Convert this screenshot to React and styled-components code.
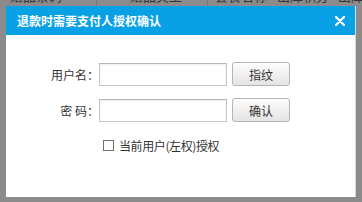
import React from 'react'
import styled, { createGlobalStyle } from 'styled-components'

const Global = createGlobalStyle`
  html, body {
    margin: 0;
    padding: 0;
    width: 362px;
    height: 202px;
    overflow: hidden;
    background: #8b8b8b;
    font-family: "Noto Sans CJK SC", "Microsoft YaHei", sans-serif;
  }
`

const Page = styled.div`
  position: relative;
  width: 362px;
  height: 202px;
  overflow: hidden;
`

const HeaderRow = styled.div`
  display: flex;
  height: 20px;
  margin-top: -14px;
  color: #333;
  font-size: 13px;
  line-height: 20px;
`

const HeadCell = styled.div`
  width: ${p => p.w}px;
  flex-shrink: 0;
  padding-left: ${p => p.pad || 0}px;
  box-sizing: border-box;
  white-space: nowrap;
  overflow: hidden;
  border-right: ${p => (p.line ? '1px solid #777' : 'none')};
`

const Dialog = styled.div`
  position: absolute;
  left: 6px;
  top: 6px;
  width: 350px;
  height: 191px;
  background: #fff;
  border-right: 1px solid #d8d8d8;
  box-sizing: border-box;
  display: flex;
  flex-direction: column;
`

const TitleBar = styled.div`
  height: 29px;
  background: #09a1e6;
  display: flex;
  align-items: center;
  justify-content: space-between;
  padding: 0 10px 0 11px;
  color: #fff;
  font-size: 12px;
  font-weight: bold;
`

const Close = styled.span`
  display: flex;
  width: 10px;
  height: 10px;
`

const Body = styled.div`
  padding: 27px 0 0 45px;
`

const Form = styled.div`
  display: grid;
  grid-template-columns: 48px 128px 63px;
  row-gap: 12px;
  align-items: center;
`

const Label = styled.label`
  text-align: right;
  font-size: 12px;
  color: #333;
  white-space: pre;
`

const Input = styled.input`
  height: 23px;
  box-sizing: border-box;
  border: 1px solid #c6c6c6;
  border-top-color: #b5b5b5;
  box-shadow: inset 0 1px 2px rgba(0, 0, 0, 0.08);
  outline: none;
  padding: 0 4px;
  margin: 0;
`

const Button = styled.button`
  justify-self: end;
  width: 58px;
  height: 24px;
  box-sizing: border-box;
  border: 1px solid #b4b4b4;
  border-radius: 3px;
  background: linear-gradient(#fdfdfd, #e4e4e4);
  font-family: inherit;
  font-size: 12px;
  color: #333;
  padding: 0;
`

const CheckRow = styled.label`
  display: flex;
  align-items: center;
  margin: 15px 0 0 52px;
  font-size: 12px;
  color: #333;
  letter-spacing: -0.4px;
`

const Box = styled.span`
  width: 11px;
  height: 11px;
  box-sizing: border-box;
  border: 1px solid #707070;
  margin-right: 5px;
`

export default function App() {
  return (
    <Page>
      <Global />
      <HeaderRow>
        <HeadCell w={97} pad={10} line>赠品条码</HeadCell>
        <HeadCell w={111} pad={33} line>赠品类型</HeadCell>
        <HeadCell w={66} pad={7}>套餐名称</HeadCell>
        <HeadCell w={60} pad={3}>出库积分</HeadCell>
        <HeadCell w={28} pad={4}>出库</HeadCell>
      </HeaderRow>
      <Dialog>
        <TitleBar>
          <span>退款时需要支付人授权确认</span>
          <Close>
            <svg width="10" height="10" viewBox="0 0 10 10">
              <path d="M1 1 L9 9 M9 1 L1 9" stroke="#fff" strokeWidth="2.2" strokeLinecap="round" />
            </svg>
          </Close>
        </TitleBar>
        <Body>
          <Form>
            <Label>用户名：</Label>
            <Input />
            <Button>指纹</Button>
            <Label>密 码：</Label>
            <Input type="password" />
            <Button>确认</Button>
          </Form>
          <CheckRow>
            <Box />
            当前用户(左权)授权
          </CheckRow>
        </Body>
      </Dialog>
    </Page>
  )
}
